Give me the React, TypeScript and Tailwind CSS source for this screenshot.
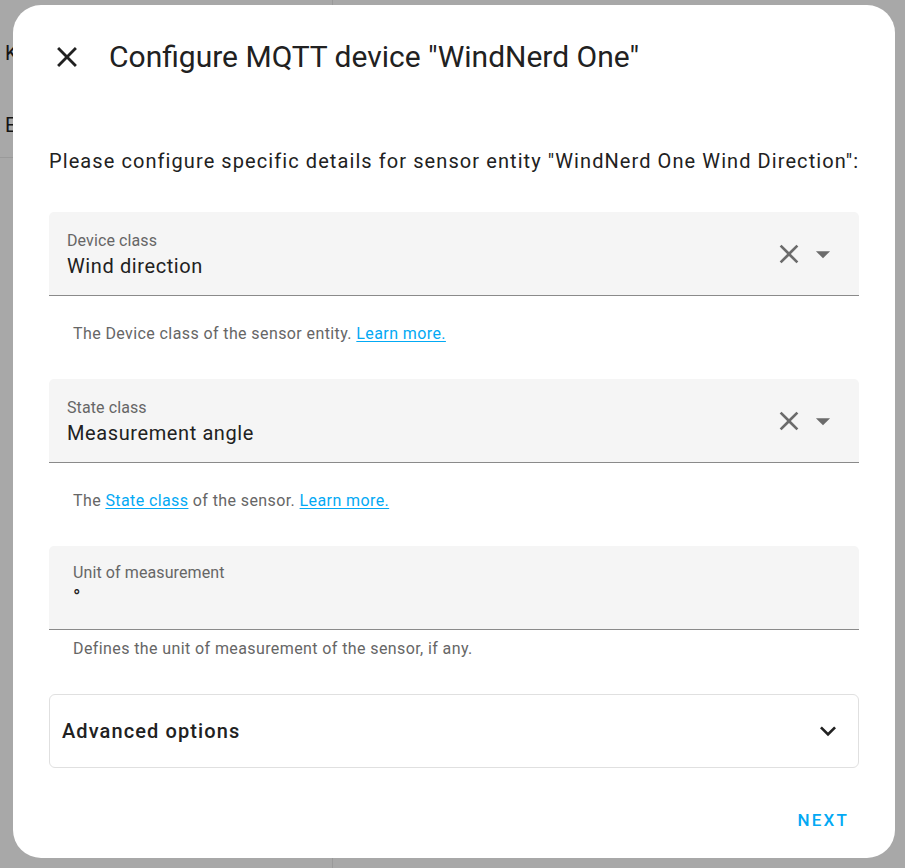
import React from "react";

const CloseIcon = ({ className }: { className?: string }) => (
	<svg viewBox="0 0 24 24" className={className} fill="currentColor">
		<path d="M19,6.41L17.59,5L12,10.59L6.41,5L5,6.41L10.59,12L5,17.59L6.41,19L12,13.41L17.59,19L19,17.59L13.41,12L19,6.41Z" />
	</svg>
);

const MenuDown = ({ className }: { className?: string }) => (
	<svg viewBox="0 0 24 24" className={className} fill="currentColor">
		<path d="M7,10L12,15L17,10H7Z" />
	</svg>
);

const ChevronDown = ({ className }: { className?: string }) => (
	<svg viewBox="0 0 24 24" className={className} fill="currentColor">
		<path d="M7.41,8.58L12,13.17L16.59,8.58L18,10L12,16L6,10L7.41,8.58Z" />
	</svg>
);

const Link = ({ children }: { children: React.ReactNode }) => (
	<a className="text-[#03a9f4] underline underline-offset-2">{children}</a>
);

const SelectField = ({
	label,
	value,
	helper,
}: {
	label: string;
	value: string;
	helper: React.ReactNode;
}) => {
	return (
		<div className="flex flex-col">
			<div className="flex h-[84px] items-center rounded-t-[5px] border-b border-[#8a8a8a] bg-[#f5f5f5] pl-[18px] pr-[19px]">
				<div className="flex flex-1 flex-col pt-[4px]">
					<span className="text-[16px] leading-[20px] tracking-[0.1px] text-[#666666]">{label}</span>
					<span className="text-[20px] leading-[30px] tracking-[0.6px] text-[#212121]">{value}</span>
				</div>
				<CloseIcon className="size-8 text-[#6b6b6b]" />
				<MenuDown className="ml-[1px] size-[34px] text-[#6b6b6b]" />
			</div>
			<div className="h-[83px] pl-[24px] pt-[26px] text-[16px] leading-[24px] tracking-[0.4px] text-[#666666]">
				{helper}
			</div>
		</div>
	);
};

export default function App() {
	return (
		<div
			className="relative h-[868px] w-[905px] overflow-hidden bg-[#a8a8a8]"
			style={{ fontFamily: "Roboto, 'Liberation Sans', sans-serif" }}
		>
			{/* page behind the scrim */}
			<div className="flex h-full">
				<div className="flex w-[333px] flex-col border-r border-[#9a9a9a]">
					<div className="flex h-[158px] flex-col border-b border-[#9a9a9a] pl-[5px] text-[20px] text-[#141414]">
						<span className="pt-[38px]">K</span>
						<span className="pt-[42px]">E</span>
					</div>
				</div>
			</div>

			<div className="absolute left-[13px] top-[5px] flex h-[853px] w-[882px] flex-col rounded-[28px] bg-white">
				<div className="flex items-center pl-[37px] pt-[34px]">
					<CloseIcon className="size-[34px] text-[#212121]" />
					<h2 className="ml-[25px] text-[30px] leading-[36px] text-[#212121]">
						Configure MQTT device "WindNerd One"
					</h2>
				</div>

				<div className="flex flex-col px-[36px] pt-[72px]">
					<p className="whitespace-nowrap text-[20px] leading-[28px] tracking-[1.08px] text-[#212121]">
						Please configure specific details for sensor entity "WindNerd One Wind Direction":
					</p>

					<div className="mt-[37px] flex flex-col">
						<SelectField
							label="Device class"
							value="Wind direction"
							helper={
								<>
									The Device class of the sensor entity. <Link>Learn more.</Link>
								</>
							}
						/>
						<SelectField
							label="State class"
							value="Measurement angle"
							helper={
								<>
									The <Link>State class</Link> of the sensor. <Link>Learn more.</Link>
								</>
							}
						/>

						<div className="flex h-[84px] flex-col rounded-t-[5px] border-b border-[#8a8a8a] bg-[#f5f5f5] pl-[24px] pt-[17px]">
							<span className="text-[16px] leading-[20px] tracking-[0.1px] text-[#666666]">Unit of measurement</span>
							<span className="pt-[2px] text-[20px] leading-[24px] text-[#212121]">°</span>
						</div>
						<div className="pl-[24px] pt-[7px] text-[16px] leading-[24px] tracking-[0.4px] text-[#666666]">
							Defines the unit of measurement of the sensor, if any.
						</div>

						<div className="mt-[33px] flex h-[74px] items-center justify-between rounded-[6px] border border-[#e0e0e0] pl-[12px] pr-[14px]">
							<span className="text-[20px] font-medium tracking-[1.1px] text-[#212121]">Advanced options</span>
							<ChevronDown className="size-8 text-[#212121]" />
						</div>
					</div>
				</div>

				<div className="flex justify-end pr-[46px] pt-[40px]">
					<button className="text-[17px] font-medium tracking-[2.2px] text-[#03a9f4]">NEXT</button>
				</div>
			</div>
		</div>
	);
}
